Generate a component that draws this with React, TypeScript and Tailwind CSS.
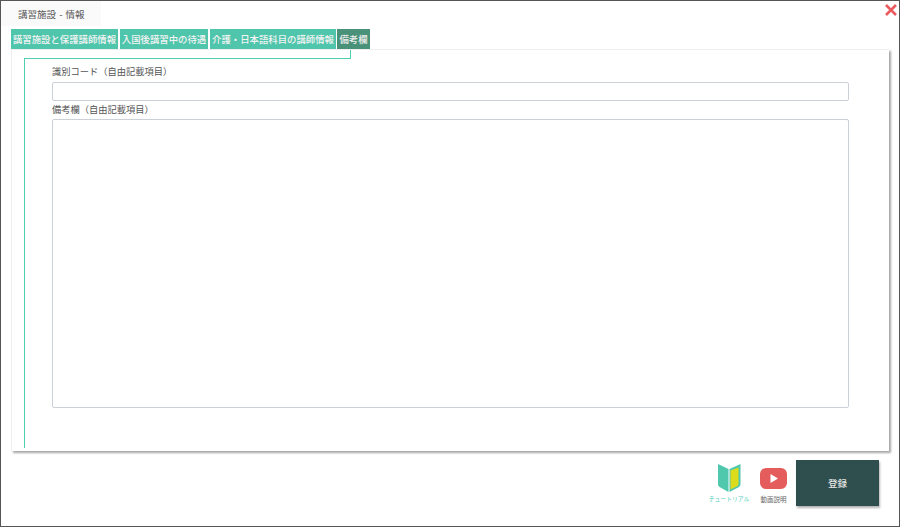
import React from 'react';

const tabs = [
  { label: '講習施設と保護講師情報', width: 'w-[107px]' },
  { label: '入国後講習中の待遇', width: 'w-[88px]' },
  { label: '介護・日本語科目の講師情報', width: 'w-[126px]' },
];

const BeginnerMark = () => (
  <svg width="24" height="29" viewBox="0 0 24 29">
    <path d="M1 1 L11.500 6 V29 L2.500 24 Q1 23 1 21 Z" fill="#4fc8ae" />
    <path d="M23.500 1 L12.500 6 V29 L22 24 Q23.500 23 23.500 21 Z" fill="#4fc8ae" />
    <path d="M21.500 4.500 L13.500 7.500 V26.500 L20.500 23 Q21.500 22.500 21.500 21 Z" fill="#dcdc1c" />
  </svg>
);

const PlayMark = () => (
  <svg width="27" height="21" viewBox="0 0 27 21">
    <rect x="0" y="0" width="27" height="21" rx="6" fill="#e55c5c" />
    <path d="M10.500 6 L18 10.500 L10.500 15 Z" fill="#ffffff" />
  </svg>
);

export default function App() {
  return (
    <div
      className="w-[900px] h-[527px] bg-white border border-[#555] flex flex-col overflow-hidden"
      style={{ fontFamily: '"Noto Sans CJK JP", "Noto Sans", sans-serif' }}
    >
      {/* タイトル */}
      <div className="flex justify-between h-[25px] shrink-0">
        <div className="w-[100px] bg-[#fafafa] pl-[17px] pt-[6px] text-[9.5px] leading-[14px] text-[#555] [word-spacing:1px]">
          講習施設 - 情報
        </div>
        <svg width="14" height="14" viewBox="0 0 14 14" className="mt-[2px] mr-[1px]">
          <path d="M2 2 L12 12 M12 2 L2 12" stroke="#ea5a5f" strokeWidth="2.600" />
        </svg>
      </div>

      {/* タブ */}
      <div className="flex gap-[2px] ml-[10px] mt-[3px] h-[20px] shrink-0">
        {tabs.map((tab) => (
          <div
            key={tab.label}
            className={`${tab.width} bg-[#4fc5ab] text-[#f4f4f4] text-[9.4px] leading-[20px] font-medium text-center whitespace-nowrap`}
          >
            {tab.label}
          </div>
        ))}
        <div className="w-[33px] -ml-[1px] bg-[#4a9179] text-[#eeeeee] text-[9.4px] leading-[20px] font-medium text-center">
          備考欄
        </div>
      </div>

      {/* パネル */}
      <div className="ml-[10px] w-[878px] h-[402px] shrink-0 bg-white border-t border-l border-[#eeeeee] shadow-[2px_2px_2px_rgba(0,0,0,0.35)] flex flex-col">
        <div className="ml-[338px] w-px h-[8px] bg-[#4fcfb0] shrink-0" />
        <div className="ml-[12px] w-[327px] h-px bg-[#4fcfb0] shrink-0" />
        <div className="ml-[12px] h-[389px] border-l border-[#4fcfb0] pl-[27px] flex flex-col">
          <label className="text-[9.250px] leading-[12px] text-[#555] mt-[6px]">識別コード（自由記載項目）</label>
          <input className="w-[797px] h-[19px] mt-[5px] bg-white border border-[#ccd0d8] rounded-[2px] outline-none" />
          <label className="text-[9.250px] leading-[12px] text-[#555] mt-[2px]">備考欄（自由記載項目）</label>
          <textarea className="w-[797px] h-[289px] mt-[4px] bg-white border border-[#ccd0d8] rounded-[2px] outline-none resize-none" />
        </div>
      </div>

      {/* フッター */}
      <div className="flex justify-end items-start mt-[9px] pr-[20px]">
        <div className="flex flex-col items-center mt-[3px] w-[40px]">
          <BeginnerMark />
          <span className="text-[5.800px] leading-[10px] mt-[2px] text-[#4fcfb8] whitespace-nowrap">チュートリアル</span>
        </div>
        <div className="flex flex-col items-center mt-[8px] ml-[11px] w-[27px]">
          <PlayMark />
          <span className="text-[6.500px] leading-[10px] mt-[5px] text-[#666] whitespace-nowrap">動画説明</span>
        </div>
        <button className="w-[83px] h-[46px] ml-[9px] bg-[#2f4f4f] text-[#e4e4e4] text-[9.500px] font-medium shadow-[1px_2px_2px_rgba(0,0,0,0.3)]">
          登録
        </button>
      </div>
    </div>
  );
}
